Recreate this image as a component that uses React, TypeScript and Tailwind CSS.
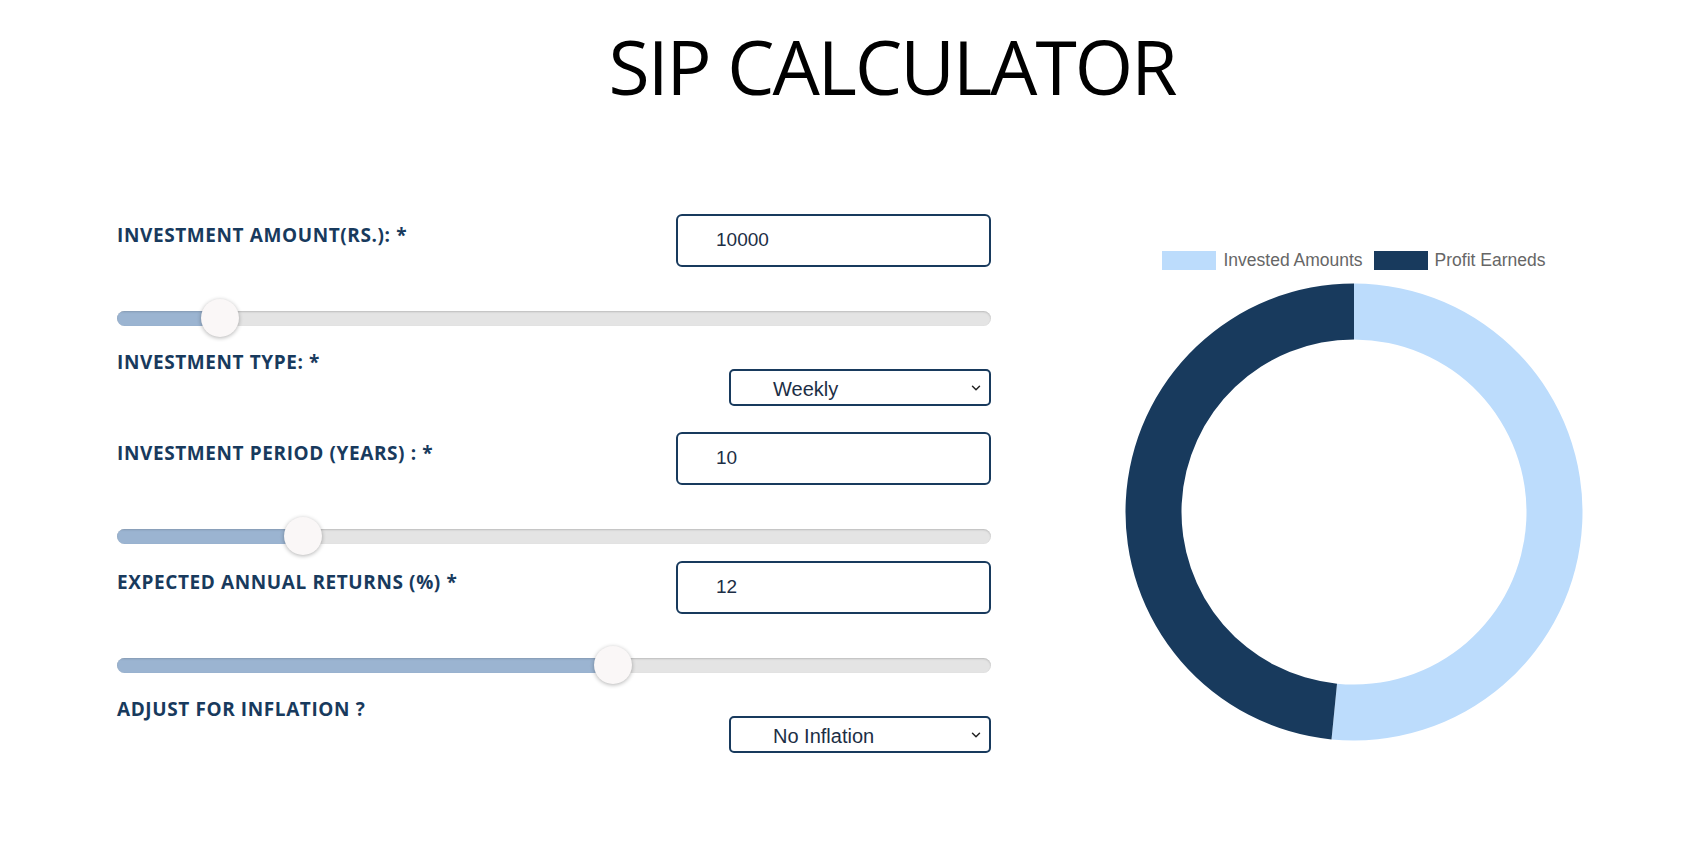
import { ChevronDown } from 'lucide-react';

type SliderProps = { pct: number };

function RangeBar({ pct }: SliderProps) {
  return (
    <div className="relative mt-[32px] h-[38px] flex items-center">
      <div className="h-[15px] w-full rounded-full bg-[#e4e4e4] shadow-[inset_0_1px_2px_rgba(0,0,0,0.18)] overflow-hidden">
        <div
          className="h-full bg-[#9bb4d1] shadow-[inset_0_1px_2px_rgba(0,0,0,0.15)]"
          style={{ width: `calc(${pct} * (100% - 38px) + 19px)` }}
        />
      </div>
      <div
        className="absolute top-0 h-[38px] w-[38px] rounded-full bg-[#faf7f7] shadow-[0_1px_4px_rgba(0,0,0,0.3)]"
        style={{ left: `calc(${pct} * (100% - 38px))` }}
      />
    </div>
  );
}

function Label({ children }: { children: React.ReactNode }) {
  return (
    <div className="font-['Open_Sans',sans-serif] font-bold text-[19px] leading-[24px] text-[#183a5d] tracking-[0.6px]">
      {children}
    </div>
  );
}

function NumberRow({ label, value, mt }: { label: string; value: string; mt: string }) {
  return (
    <div className={`flex justify-between items-start ${mt}`}>
      <div className="mt-[9px]">
        <Label>{label}</Label>
      </div>
      <div className="w-[315px] h-[53px] border-2 border-[#183a5d] rounded-[6px] flex items-center pl-[38px] font-['Liberation_Sans',Arial,sans-serif] text-[19px] text-[#1c2e45]">
        {value}
      </div>
    </div>
  );
}

function SelectRow({ label, value }: { label: string; value: string }) {
  return (
    <div className="flex justify-between items-start mt-[13px]">
      <Label>{label}</Label>
      <div className="mt-[19px] w-[262px] h-[37px] border-2 border-[#183a5d] rounded-[5px] flex items-center justify-between pl-[42px] pr-[6px] pt-[2px] font-['Liberation_Sans',Arial,sans-serif] text-[20px] text-[#1c2e45]">
        <span>{value}</span>
        <ChevronDown size={14} strokeWidth={2.5} className="text-[#222] -mt-[2px]" />
      </div>
    </div>
  );
}

function arc(cx: number, cy: number, R: number, r: number, a0: number, a1: number) {
  const pt = (rad: number, a: number) => [cx + rad * Math.sin(a), cy - rad * Math.cos(a)];
  const large = a1 - a0 > Math.PI ? 1 : 0;
  const [x0, y0] = pt(R, a0);
  const [x1, y1] = pt(R, a1);
  const [x2, y2] = pt(r, a1);
  const [x3, y3] = pt(r, a0);
  return `M${x0} ${y0} A${R} ${R} 0 ${large} 1 ${x1} ${y1} L${x2} ${y2} A${r} ${r} 0 ${large} 0 ${x3} ${y3} Z`;
}

function Donut() {
  const invested = 0.5157;
  const split = invested * Math.PI * 2;
  return (
    <svg width="458" height="458" viewBox="0 0 458 458">
      <path d={arc(229, 229, 228.5, 172.5, 0, split)} fill="#bcdcfc" />
      <path d={arc(229, 229, 228.5, 172.5, split, Math.PI * 2)} fill="#183a5d" />
    </svg>
  );
}

export default function App() {
  return (
    <div className="min-h-screen w-full bg-white">
      {/* Title */}
      <div className="flex justify-center pl-[102px] pt-[29px]">
        <h1 className="font-['Open_Sans',sans-serif] font-normal text-[75px] leading-none tracking-[-2px] text-black">
          SIP CALCULATOR
        </h1>
      </div>

      <div className="flex pl-[117px]">
        {/* Form */}
        <div className="w-[874px] flex flex-col mt-[110px]">
          <NumberRow label="INVESTMENT AMOUNT(RS.): *" value="10000" mt="mt-0" />
          <RangeBar pct={0.1} />
          <SelectRow label="INVESTMENT TYPE: *" value="Weekly" />
          <NumberRow label="INVESTMENT PERIOD (YEARS) : *" value="10" mt="mt-[26px]" />
          <RangeBar pct={0.2} />
          <NumberRow label="EXPECTED ANNUAL RETURNS (%) *" value="12" mt="mt-[6px]" />
          <RangeBar pct={0.571} />
          <SelectRow label="ADJUST FOR INFLATION ?" value="No Inflation" />
        </div>

        {/* Chart */}
        <div className="ml-[134px] w-[458px] flex flex-col items-center mt-[143px]">
          <div className="flex items-center font-['Liberation_Sans',Arial,sans-serif] text-[17.5px] text-[#666]">
            <div className="w-[54px] h-[19px] bg-[#bcdcfc]" />
            <span className="ml-[7px]">Invested Amounts</span>
            <div className="ml-[11px] w-[54px] h-[19px] bg-[#183a5d]" />
            <span className="ml-[7px]">Profit Earneds</span>
          </div>
          <div className="mt-[10px]">
            <Donut />
          </div>
        </div>
      </div>
    </div>
  );
}
